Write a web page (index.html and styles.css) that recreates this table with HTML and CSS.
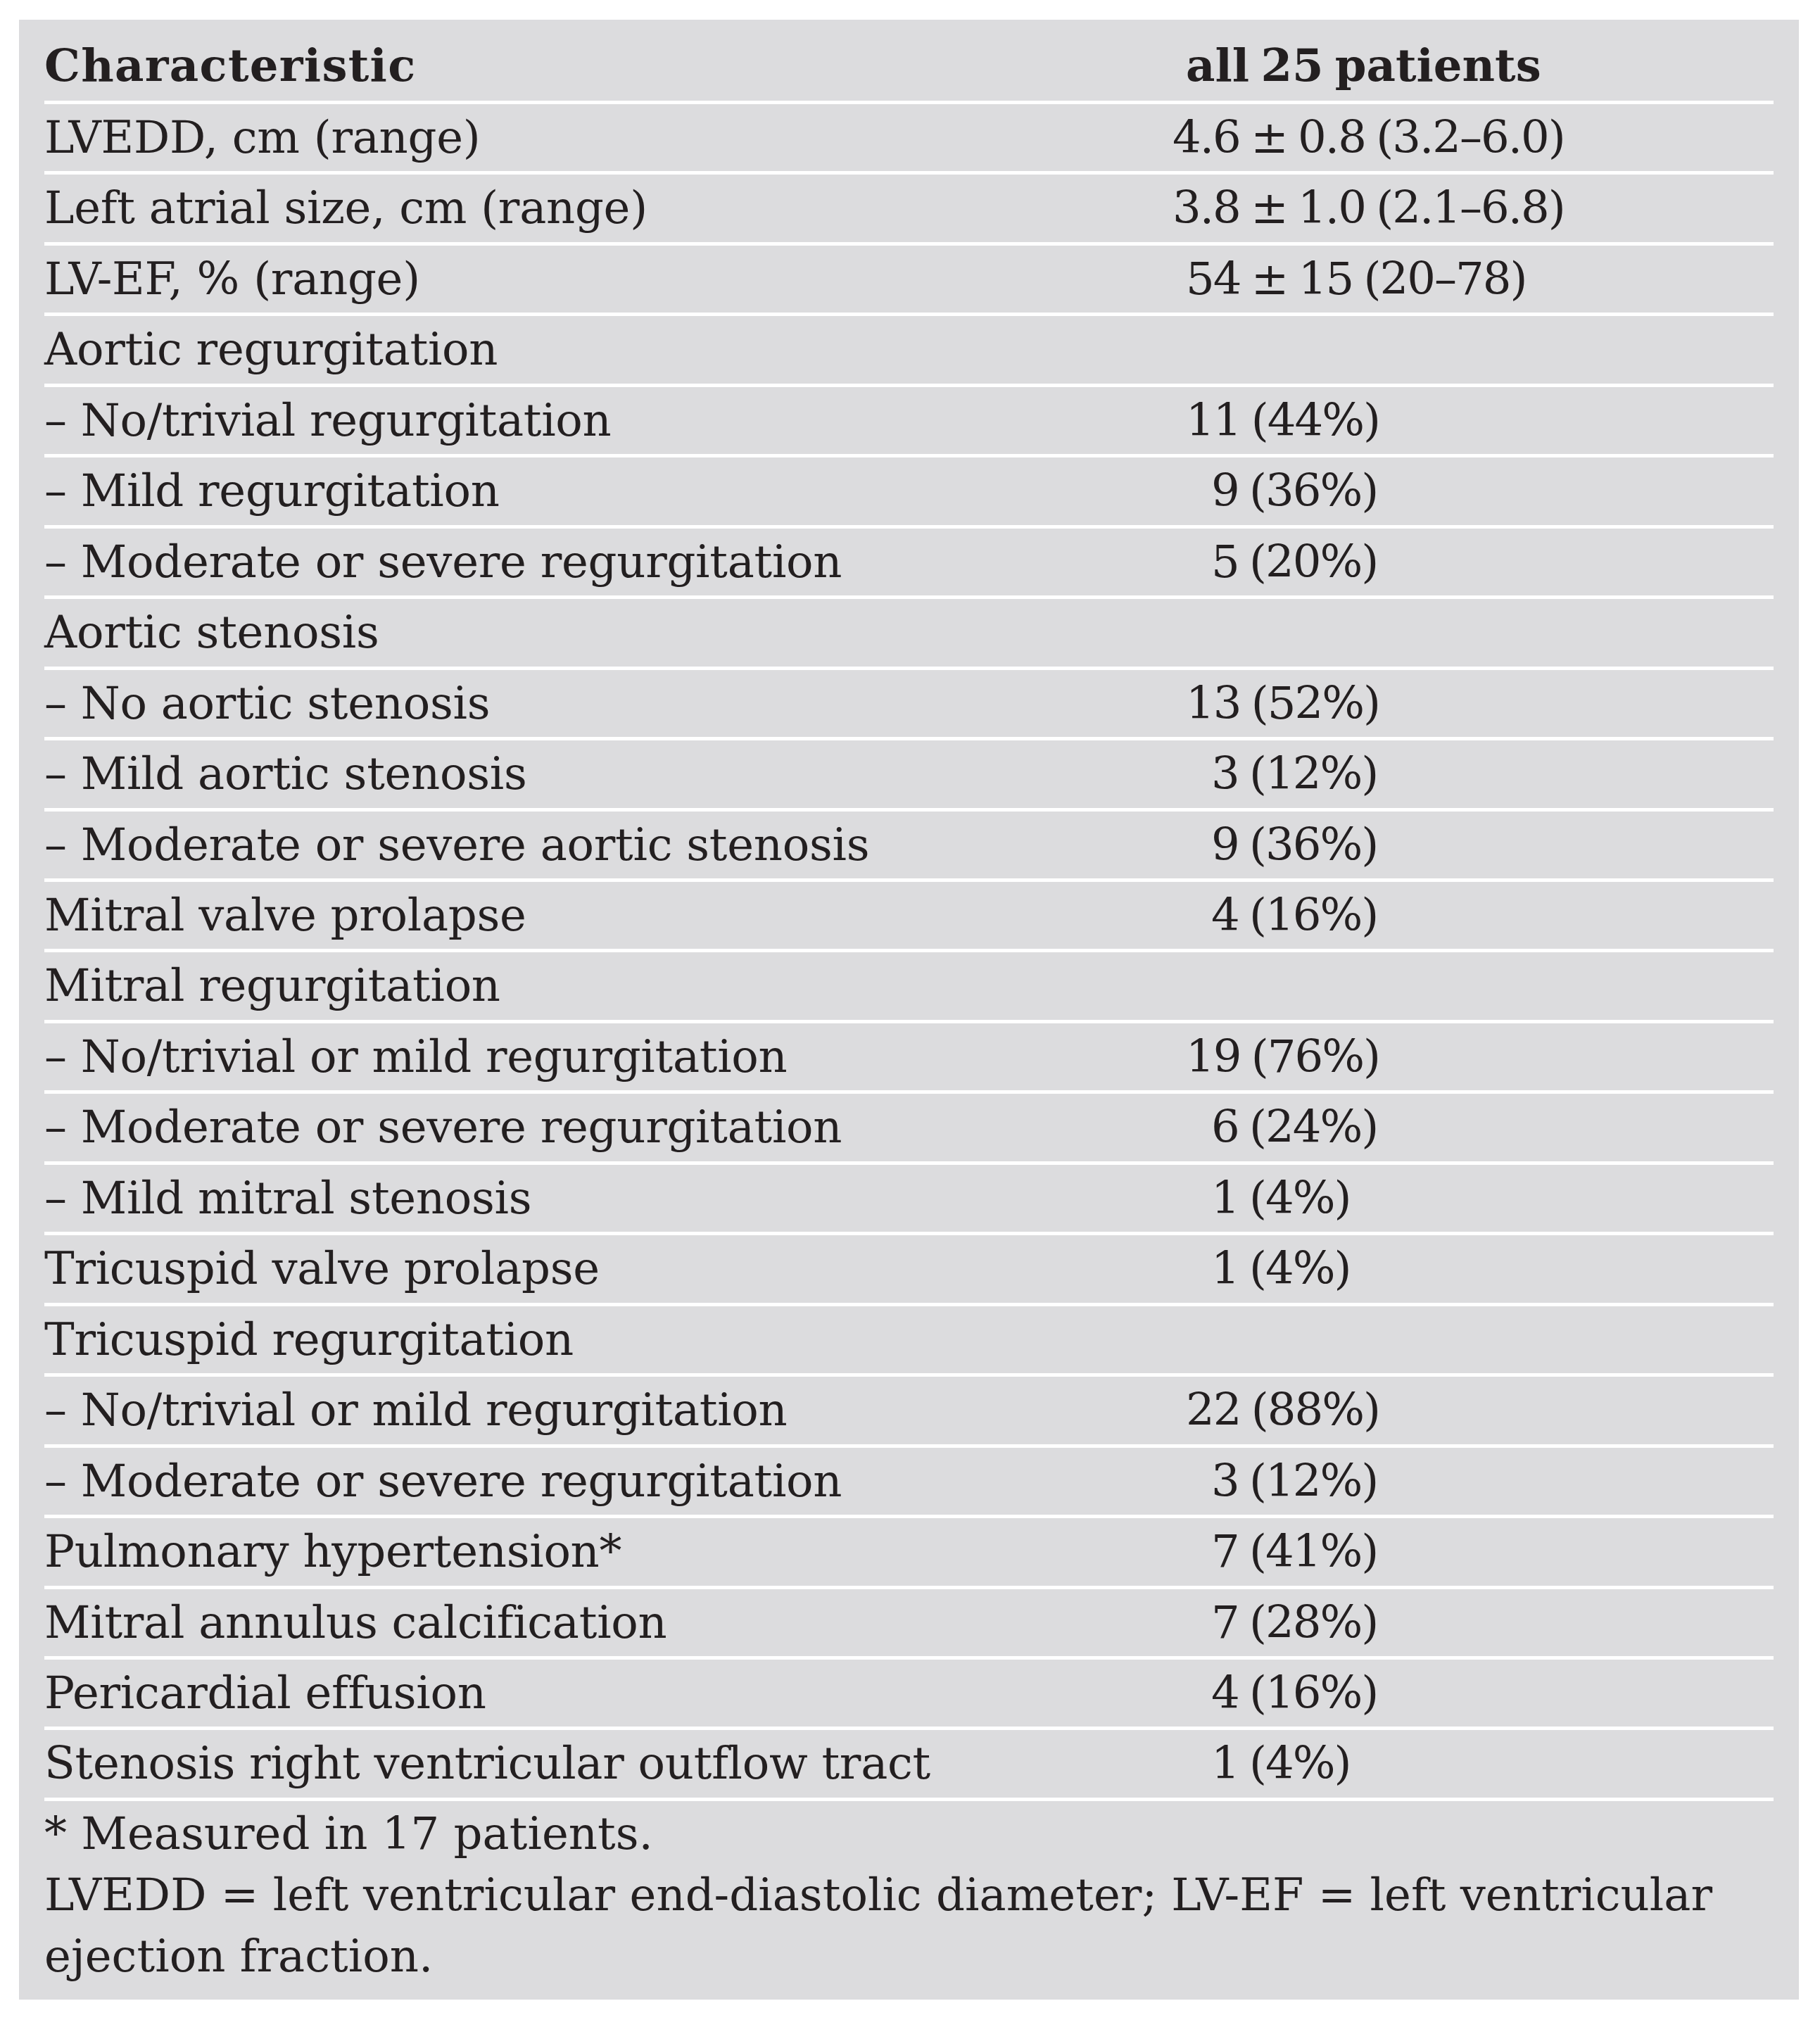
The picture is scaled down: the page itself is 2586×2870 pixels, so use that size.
FILE: index.html
```html
<!DOCTYPE html>
<html lang="en">
<head>
<meta charset="utf-8">
<title>Echocardiographic characteristics</title>
<link rel="stylesheet" href="styles.css">
</head>
<body>
<div class="panel">
  <div class="table">
    <div class="row head"><div class="label">Characteristic</div><div class="value">all 25 patients</div></div>
    <div class="row"><div class="label">LVEDD, cm (range)</div><div class="value shift">4.6 ± 0.8 (3.2–6.0)</div></div>
    <div class="row"><div class="label">Left atrial size, cm (range)</div><div class="value shift">3.8 ± 1.0 (2.1–6.8)</div></div>
    <div class="row"><div class="label">LV-EF, % (range)</div><div class="value">54 ± 15 (20–78)</div></div>
    <div class="row"><div class="label">Aortic regurgitation</div><div class="value"></div></div>
    <div class="row"><div class="label">– No/trivial regurgitation</div><div class="value">11 (44%)</div></div>
    <div class="row"><div class="label">– Mild regurgitation</div><div class="value pad">9 (36%)</div></div>
    <div class="row"><div class="label">– Moderate or severe regurgitation</div><div class="value pad">5 (20%)</div></div>
    <div class="row"><div class="label">Aortic stenosis</div><div class="value"></div></div>
    <div class="row"><div class="label">– No aortic stenosis</div><div class="value">13 (52%)</div></div>
    <div class="row"><div class="label">– Mild aortic stenosis</div><div class="value pad">3 (12%)</div></div>
    <div class="row"><div class="label">– Moderate or severe aortic stenosis</div><div class="value pad">9 (36%)</div></div>
    <div class="row"><div class="label">Mitral valve prolapse</div><div class="value pad">4 (16%)</div></div>
    <div class="row"><div class="label">Mitral regurgitation</div><div class="value"></div></div>
    <div class="row"><div class="label">– No/trivial or mild regurgitation</div><div class="value">19 (76%)</div></div>
    <div class="row"><div class="label">– Moderate or severe regurgitation</div><div class="value pad">6 (24%)</div></div>
    <div class="row"><div class="label">– Mild mitral stenosis</div><div class="value pad">1 (4%)</div></div>
    <div class="row"><div class="label">Tricuspid valve prolapse</div><div class="value pad">1 (4%)</div></div>
    <div class="row"><div class="label">Tricuspid regurgitation</div><div class="value"></div></div>
    <div class="row"><div class="label">– No/trivial or mild regurgitation</div><div class="value">22 (88%)</div></div>
    <div class="row"><div class="label">– Moderate or severe regurgitation</div><div class="value pad">3 (12%)</div></div>
    <div class="row"><div class="label">Pulmonary hypertension*</div><div class="value pad">7 (41%)</div></div>
    <div class="row"><div class="label">Mitral annulus calcification</div><div class="value pad">7 (28%)</div></div>
    <div class="row"><div class="label">Pericardial effusion</div><div class="value pad">4 (16%)</div></div>
    <div class="row"><div class="label">Stenosis right ventricular outflow tract</div><div class="value pad">1 (4%)</div></div>
  </div>
  <div class="notes">
    <p>* Measured in 17 patients.</p>
    <p>LVEDD = left ventricular end-diastolic diameter; LV-EF = left ventricular<br>ejection fraction.</p>
  </div>
</div>
</body>
</html>
```
FILE: styles.css
```css
html, body {
  margin: 0;
  padding: 0;
  background: #ffffff;
}

body {
  font-family: "DejaVu Serif", "Liberation Serif", serif;
  font-size: 64px;
  color: #231f20;
}

.panel {
  box-sizing: border-box;
  width: 2529px;
  height: 2813px;
  margin: 28px 0 0 27px;
  padding: 0 36px 19px 36px;
  background: #dcdcde;
}

.table {
  display: flex;
  flex-direction: column;
}

.row {
  display: grid;
  grid-template-columns: 1622px 1fr;
  line-height: 95.45px;
  border-bottom: 5px solid #ffffff;
  white-space: nowrap;
}

.label {
  letter-spacing: -0.3px;
}

.value {
  letter-spacing: -2px;
  word-spacing: -3px;
}

.row.head {
  font-weight: bold;
  padding-top: 17.2px;
  padding-bottom: 2.4px;
}

.row.head .label {
  letter-spacing: 1.3px;
}

.row.head .value {
  letter-spacing: 0;
  word-spacing: -6px;
}

.value.pad {
  padding-left: 36px;
}

.value.shift {
  margin-left: -19px;
}

.notes {
  padding-top: 3.4px;
  line-height: 87px;
}

.notes p {
  margin: 0;
}
```
